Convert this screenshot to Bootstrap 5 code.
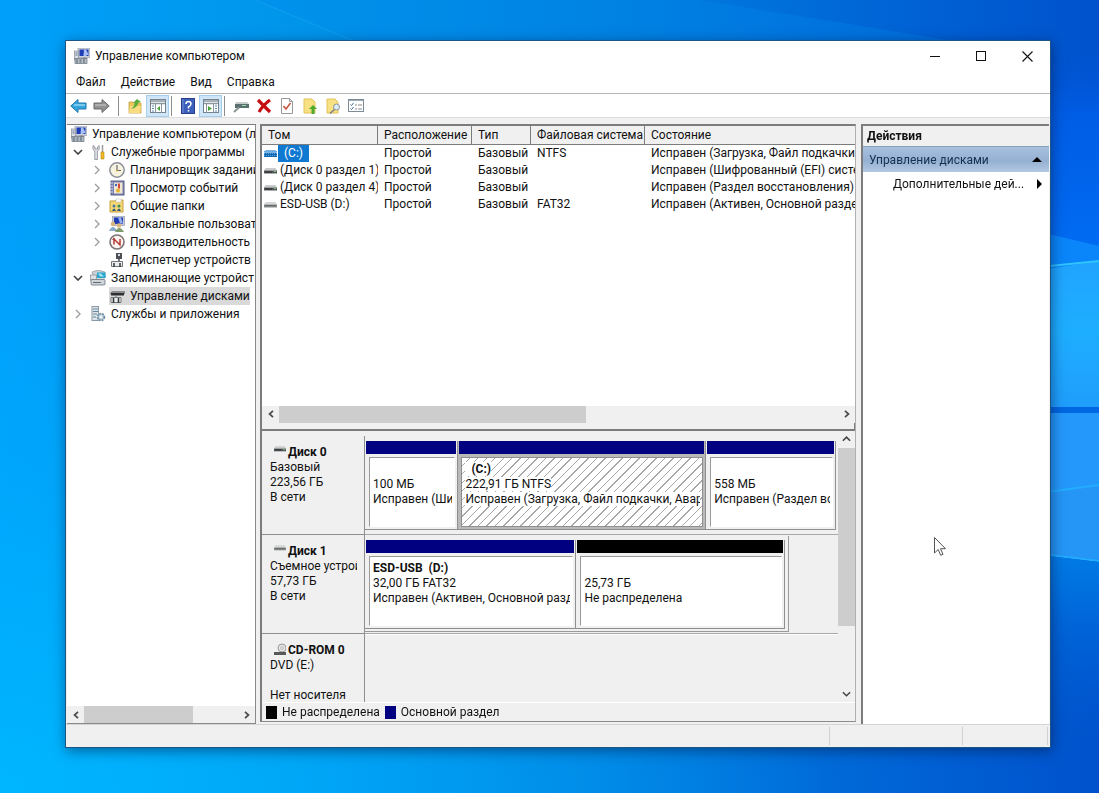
<!DOCTYPE html>
<html lang="ru">
<head>
<meta charset="utf-8">
<meta name="viewport" content="width=device-width, initial-scale=1">
<title>Управление компьютером</title>
<link href="https://cdn.jsdelivr.net/npm/bootstrap@5.3.0/dist/css/bootstrap.min.css" rel="stylesheet">
<style>
  body { font-family: Roboto, "Open Sans", sans-serif; font-size: 12px; line-height: 18px; color: #111; background: #0078de; }
  a { color: inherit; text-decoration: none; }
  button { border: 0; background: none; padding: 0; color: inherit; font: inherit; }
  svg { display: block; flex: none; }
  .wallpaper { position: fixed; inset: 0; width: 100%; height: 100%; z-index: -1; }
  .desktop { height: 100vh; min-height: 560px; padding: 40px 48px 45px 65px; }
  .win { background: #f0f0f0; border: 1px solid #1b5687; box-shadow: 1px 3px 12px rgba(0,20,60,.5); }
  .titlebar { height: 30px; padding-left: 8px; gap: 5px; }
  .caption { width: 46px; height: 30px; }
  .menubar { height: 22px; padding-left: 10px; gap: 15px; }
  .toolbar { height: 25px; border-top: 1px solid #b4b4b4; border-bottom: 1px solid #dcdcdc; padding-left: 4px; }
  .tool { width: 23px; height: 22px; }
  .tool.on { background: #cfe6f8; border: 1px solid #a6cfee; }
  .vsep { width: 1px; height: 20px; background: #8d8d8d; margin: 0 4px 0 2px; }
  .workspace { padding: 6px 1px 0; gap: 4px; min-height: 0; }
  .pane { background: #fff; border-top: 2px solid #7c7c7c; min-height: 0; }
  .tree-pane { width: 189px; border-right: 1px solid #8a8a8a; border-bottom: 1px solid #8a8a8a; border-top-width: 1px; }
  .tree-pane ul { margin: 0; padding: 0; list-style: none; }
  .node { height: 18px; white-space: nowrap; padding-left: 3px; gap: 5px; }
  .node a { gap: 5px; }
  .twist { width: 16px; height: 18px; margin-right: -1px; flex: none; }
  .lvl2 { padding-left: 22px; }
  .chosen { background: #d9d9d9; }
  .hbar { height: 17px; background: #f0f0f0; flex: none; }
  .arrow-btn { width: 17px; height: 17px; }
  .thumb { background: #cdcdcd; }
  .mid-pane { border-left: 2px solid #7c7c7c; border-right: 1px solid #b0b0b0; border-bottom: 1px solid #8a8a8a; background: #f0f0f0; min-width: 0; margin-bottom: 2px; }
  .volumes { flex: 0 1 280px; background: #fff; }
  .voltable { table-layout: fixed; width: 100%; border-collapse: separate; border-spacing: 0; }
  .voltable th, .voltable td { white-space: nowrap; overflow: hidden; padding: 0 0 0 6px; font-weight: 400; }
  .voltable th { height: 19px; line-height: 18px; background: #f0f0f0; border-bottom: 1px solid #7c7c7c; border-right: 1px solid #7c7c7c; }
  .voltable th:last-child { border-right: 0; }
  .voltable td { height: 17px; line-height: 17px; }
  .voltable td:first-child { padding-left: 2px; }
  .voltable a { padding-left: 3px; }
  .voltable .picked { background: #0f78d0; color: #fff; padding: 0 6px; margin-left: 1px; }
  .splitter { height: 8px; flex: none; border-bottom: 2px solid #7c7c7c; border-right: 1px solid #7c7c7c; background: #f0f0f0; }
  .maps { padding-top: 5px; line-height: 15px; }
  .disk { height: 99px; flex: none; }
  .disk.cut { flex: 0 1 68px; }
  .disk-head { width: 103px; padding: 9px 7px 0 8px; border-right: 1px solid #8f8f8f; border-bottom: 1px solid #8f8f8f; white-space: nowrap; overflow: hidden; }
  .disk-head b { padding-left: 2px; }
  .disk-body { border-bottom: 1px solid #a8a8a8; padding: 5px 2px 4px 0; min-width: 0; }
  .disk.cut .disk-head, .disk.cut .disk-body { border-bottom: 0; }
  .disk.cut .disk-body { border-top: 1px solid #fff; }
  .group-box { border-right: 1px solid #9a9a9a; border-bottom: 1px solid #9a9a9a; padding: 4px 3px 2px 0; margin: -4px 0 -3px; min-width: 0; }
  .vol { min-width: 0; border-right: 1px solid #8f8f8f; border-bottom: 1px solid #8f8f8f; padding: 0 1px; }
  .stripe { height: 13px; background: #000080; flex: none; }
  .stripe.free { background: #000; }
  .vol-box { margin: 3px 1px 2px 3px; background: #fff; border: 1px solid #9a9a9a; border-right-color: #fff; border-bottom-color: #fff; padding: 4px 2px 0 3px; white-space: nowrap; overflow: hidden; min-height: 0; }
  .vol-box div { overflow: hidden; }
  .sel { background: #b9b9b9; }
  .sel .vol-box { margin: 3px 1px 2px 2px; border-color: #8f8f8f; background: repeating-linear-gradient(135deg, #fff 0 5px, #a8a8a8 5px 6px); }
  .sel .vol-box span { background: #fff; }
  .vbar { width: 17px; background: #f0f0f0; flex: none; }
  .legend { height: 19px; padding-left: 4px; gap: 5px; border-top: 1px solid #fff; flex: none; white-space: nowrap; }
  .key { width: 11px; height: 13px; }
  .action-pane { width: 188px; border-left: 2px solid #7c7c7c; margin-left: 1px; }
  .action-title { height: 21px; line-height: 20px; background: #f0f0f0; border-bottom: 1px solid #8ba3b8; padding-left: 4px; }
  .action-group { height: 25px; background: linear-gradient(#a9c0df, #94b0d2 55%, #b3c8e2); padding: 0 7px 0 6px; color: #16304f; }
  .action-item { height: 24px; padding: 0 6px 0 30px; }
  .statusbar { height: 23px; border-top: 1px solid #d4d4d4; padding-right: 2px; }
  .statusbar div { border-right: 1px solid #d0d0d0; margin: 2px 0 2px; }
  .pointer { position: absolute; left: 85%; top: 67.7%; }
</style>
</head>
<body class="overflow-hidden">
<svg class="wallpaper" viewBox="0 0 1099 793" preserveAspectRatio="none" aria-hidden="true">
  <defs>
    <linearGradient id="sky" x1="0" y1="0" x2="1" y2="0"><stop offset="0" stop-color="#00a0fa"/><stop offset=".25" stop-color="#0096ec"/><stop offset=".55" stop-color="#0080e0"/><stop offset=".85" stop-color="#0060d4"/><stop offset="1" stop-color="#0052cc"/></linearGradient>
    <radialGradient id="low" cx="0" cy="1" r=".75"><stop offset="0" stop-color="#00b8ff" stop-opacity=".95"/><stop offset="1" stop-color="#00a8ff" stop-opacity="0"/></radialGradient>
    <linearGradient id="side" x1="0" y1="0" x2="0" y2="1"><stop offset="0" stop-color="#0052d0" stop-opacity="0"/><stop offset=".3" stop-color="#005ce4"/><stop offset="1" stop-color="#0070f6"/></linearGradient>
    <linearGradient id="glass" x1="0" y1="0" x2="0" y2="1"><stop offset="0" stop-color="#20a4ff"/><stop offset=".4" stop-color="#1eaeff"/><stop offset="1" stop-color="#2097fb"/></linearGradient>
    <linearGradient id="fall" x1="0" y1="0" x2="0" y2="1"><stop offset="0" stop-color="#007be6"/><stop offset=".3" stop-color="#0064d8"/><stop offset=".8" stop-color="#005ad0" stop-opacity="0"/></linearGradient>
  </defs>
  <rect width="1099" height="793" fill="url(#sky)"/>
  <rect width="1099" height="793" fill="url(#low)"/>
  <path d="M255 0H700L960 42H365Z" fill="#008cea" opacity=".3"/>
  <path d="M255 0 375 50" stroke="#22a6ef" opacity=".5"/>
  <path d="M1040 40H1099V270L1040 280Z" fill="url(#side)"/>
  <path d="M1040 232 1099 246V262L1040 270Z" fill="#0a86fa"/>
  <path d="M1040 270 1099 261V436H1040Z" fill="url(#glass)"/>
  <path d="M1040 267 1099 261" stroke="#2fc4ff" stroke-width="2"/>
  <path d="M1040 413H1099V561L1040 554Z" fill="#2598fb"/>
  <path d="M1040 407H1099V413H1040Z" fill="#0068e2"/>
  <path d="M1040 493 1099 485V561L1040 554Z" fill="#2596f6"/>
  <path d="M1040 493 1099 485M1040 554 1099 561" stroke="#22adff" stroke-width="2" fill="none"/>
  <path d="M1040 555 1099 562V793H1040Z" fill="url(#fall)"/>
</svg>

<!-- Shared icon shapes -->
<svg width="0" height="0" class="position-absolute" aria-hidden="true">
  <symbol id="i-pc" viewBox="0 0 16 16"><rect x="4" y="0" width="12" height="9.500" fill="#cfd3dc" stroke="#8b90a0" stroke-width=".6"/><rect x="5.500" y="1.500" width="9" height="6.500" fill="#1e3cb4"/><path d="M10 1.500h2l2.500 5-3 1.500h-2z" fill="#a9c0f6"/><path d="M9 9.500h3l1 1.500H8z" fill="#8a8d96"/><rect x=".5" y="3" width="4" height="9" fill="#dcdfe4" stroke="#858a94" stroke-width=".7"/><path d="M1.500 5h2M1.500 7h2" stroke="#53708c"/><rect x="1" y="10.500" width="12" height="5" fill="#b8bdc4" stroke="#68737e" stroke-width=".7"/><path d="M2 12h2M5.500 12h2M9 12h2M2 14h2M5.500 14h2M9 14h2" stroke="#4b6376"/></symbol>
  <symbol id="i-tools" viewBox="0 0 16 16"><path d="M3 1.500v4l1.800 1.500v8.500h2.600V7l1.800-1.500v-4L7.500 3v2H5V3z" fill="#e3e5e8" stroke="#85898f" stroke-width=".8"/><path d="M12.500 1v7" stroke="#999" stroke-width="1.500"/><path d="M11 8h3v7h-3z" fill="#f0ba25" stroke="#b78a10" stroke-width=".6"/></symbol>
  <symbol id="i-clock" viewBox="0 0 16 16"><circle cx="8" cy="8" r="7.200" fill="#f6f2de" stroke="#8a8f99" stroke-width="1.500"/><path d="M8 3v5.500h4" stroke="#626977" stroke-width="1.200" fill="none"/><circle cx="8" cy="8.500" r="1" fill="#d4a73a"/></symbol>
  <symbol id="i-events" viewBox="0 0 16 16"><rect x="2" y="1" width="13" height="14" fill="#7a83b4" stroke="#5a6088"/><rect x="5" y="2.500" width="8.500" height="11" fill="#f1e6d2"/><path d="M1 3h3M1 6h3M1 9h3M1 12h3" stroke="#d9dce8"/><path d="M10 3.500v5" stroke="#cf3326" stroke-width="1.800"/><circle cx="9" cy="10.500" r="2" fill="#e3b32c"/><circle cx="7" cy="5" r="1.200" fill="#3c66c0"/></symbol>
  <symbol id="i-shared" viewBox="0 0 16 16"><path d="M1 3h5l1-1h7v12H1z" fill="#f2d774" stroke="#c7a03a"/><path d="M7 1h5v3H7z" fill="#fff" stroke="#bbb" stroke-width=".5"/><circle cx="5" cy="8" r="1.500" fill="#4b78a7"/><circle cx="10" cy="8" r="1.500" fill="#3d8a55"/><path d="M3 13q2-5 4 0M8 13q2-5 4 0" fill="#35567d"/></symbol>
  <symbol id="i-users" viewBox="0 0 16 16"><rect x="3.500" y="0" width="12" height="9.500" fill="#c4c9d5" stroke="#858aa0" stroke-width=".6"/><rect x="5" y="1.500" width="9" height="6.500" fill="#1e3cb4"/><path d="M9 1.500h3l2 6h-3z" fill="#97b2f0"/><circle cx="4" cy="8" r="2.300" fill="#d6b47c"/><path d="M0 15q4-8 8 0z" fill="#86a9cc"/><circle cx="10" cy="9.500" r="2.300" fill="#ddb77e"/><path d="M6 16q4-8 9 0z" fill="#7f9a6a"/></symbol>
  <symbol id="i-perf" viewBox="0 0 16 16"><circle cx="8" cy="8" r="7" fill="#fcf4f2" stroke="#7c7275" stroke-width="1.600"/><path d="M5 10.500V5l6 6V5" fill="none" stroke="#b83b34" stroke-width="1.500"/><path d="M3.500 6l2-2" stroke="#8d2524"/></symbol>
  <symbol id="i-device" viewBox="0 0 16 16"><rect x="7" y="1" width="6" height="6" fill="#4d5157"/><rect x="9" y="2" width="2" height="2" fill="#d5d9de"/><path d="M9 7h2v3H9z" fill="#777"/><path d="M2.500 9.500h11v5h-11z" fill="#e9ebed" stroke="#73777c"/><path d="M5 11v4M11 11v4" stroke="#3f4348" stroke-width="1.600"/></symbol>
  <symbol id="i-store" viewBox="0 0 16 16"><path d="M2 2 8 0l7 2v6H4z" fill="#c9d1d8" stroke="#8d969e" stroke-width=".7"/><path d="M7 2.500h8.500V8H7z" fill="#28a6cb"/><path d="M8 3.500h3l3 3h-4z" fill="#a4e3f2"/><rect x=".5" y="5" width="6" height="5" fill="#dde0e3" stroke="#888e94" stroke-width=".7"/><rect x="1" y="9.500" width="14" height="5.500" rx="1" fill="#d0d5da" stroke="#6a747d" stroke-width=".8"/><path d="M3 12.500h8" stroke="#606970"/></symbol>
  <symbol id="i-diskman" viewBox="0 0 16 16"><path d="M1 5 3 3h13v3H1z" fill="#8a8d90"/><path d="M2 5h13v2.500H2z" fill="#2d2f31"/><path d="M2 9.500h10v5H2z" fill="#eceeee" stroke="#777b7e"/><path d="M4.500 10v5M9.500 10v5" stroke="#34383b" stroke-width="1.600"/><path d="M7 7v3" stroke="#777"/></symbol>
  <symbol id="i-services" viewBox="0 0 16 16"><rect x="2" y=".5" width="6.500" height="14" fill="#dfe5e9" stroke="#8b99a4"/><path d="M3 3h5M3 5.500h5M3 8h4M3 11h3" stroke="#65899e"/><circle cx="11" cy="11" r="3.400" fill="#b8ced9" stroke="#6d8fa3" stroke-width="1.800" stroke-dasharray="1.800 1"/><circle cx="11" cy="11" r="1.400" fill="#f4f8fa"/></symbol>
  <symbol id="i-hdd" viewBox="0 0 13 8"><path d="M1.500 1h10L13 3.500H0z" fill="#c9cacb"/><path d="M0 3.500h13v3H0z" fill="#55595b"/><path d="M1 5h7" stroke="#252829"/><rect x="10" y="4" width="2" height="1" fill="#6ec26e"/></symbol>
  <symbol id="i-hdd-on" viewBox="0 0 13 8"><path d="M1.500 0h10L13 3.500H0z" fill="#7db1df"/><path d="M0 3h13v4H0z" fill="#1769ad"/><path d="M0 1.500h13M0 3.500h13M0 5.500h13" stroke="#4da4e8" stroke-dasharray="1 1"/></symbol>
  <symbol id="i-usb" viewBox="0 0 13 8"><path d="M1.500 1h10L13 3.500H0z" fill="#d5d6d6"/><path d="M0 3.500h13v3H0z" fill="#86898a"/><path d="M1 4.500h11" stroke="#626667"/></symbol>
  <symbol id="c-right" viewBox="0 0 6 10"><path d="M1 1l4 4-4 4" fill="none" stroke="currentColor" stroke-width="1.400"/></symbol>
  <symbol id="c-down" viewBox="0 0 10 6"><path d="M1 1l4 4 4-4" fill="none" stroke="currentColor" stroke-width="1.600"/></symbol>
  <symbol id="c-up" viewBox="0 0 10 6"><path d="M1 5l4-4 4 4" fill="none" stroke="currentColor" stroke-width="1.800"/></symbol>
  <symbol id="b-left" viewBox="0 0 6 8"><path d="M5 .8 1.500 4 5 7.200" fill="none" stroke="#4a4a4a" stroke-width="1.700"/></symbol>
  <symbol id="b-right" viewBox="0 0 6 8"><path d="M1 .8 4.500 4 1 7.200" fill="none" stroke="#4a4a4a" stroke-width="1.700"/></symbol>
</svg>

<div class="desktop d-flex">
<main class="win d-flex flex-column flex-grow-1 overflow-hidden">
  <header class="bg-white">
    <div class="titlebar d-flex align-items-center">
      <svg width="16" height="16"><use href="#i-pc"/></svg>
      <span>Управление компьютером</span>
      <div class="d-flex ms-auto">
        <button class="caption d-flex align-items-center justify-content-center" aria-label="Свернуть"><svg width="11" height="11"><path d="M0 5.500h10" stroke="#111"/></svg></button>
        <button class="caption d-flex align-items-center justify-content-center" aria-label="Развернуть"><svg width="11" height="11"><rect x=".5" y=".5" width="9" height="9" fill="none" stroke="#111"/></svg></button>
        <button class="caption d-flex align-items-center justify-content-center" aria-label="Закрыть"><svg width="11" height="11"><path d="M.5.5l10 10M10.500.5l-10 10" stroke="#111" stroke-width="1.100"/></svg></button>
      </div>
    </div>
    <nav class="menubar d-flex align-items-center">
      <a href="#">Файл</a><a href="#">Действие</a><a href="#">Вид</a><a href="#">Справка</a>
    </nav>
    <div class="toolbar d-flex align-items-center" role="toolbar">
      <button class="tool d-flex align-items-center" aria-label="Назад"><svg width="17" height="16"><path d="M.8 8 8 1.500V5h8v6H8v3.500z" fill="#35a5dd" stroke="#2278ad"/><path d="M4 7h11" stroke="#91d7f3" stroke-width="1.500"/></svg></button>
      <button class="tool d-flex align-items-center" aria-label="Вперед"><svg width="17" height="16"><path d="M16.200 8 9 1.500V5H1v6h8v3.500z" fill="#929292" stroke="#696969"/><path d="M2 7h11" stroke="#b8b8b8" stroke-width="1.500"/></svg></button>
      <span class="vsep"></span>
      <button class="tool d-flex align-items-center justify-content-center" aria-label="Вверх"><svg width="16" height="16"><path d="M2 4h4l1 1h7v10H2z" fill="#ecc85c" stroke="#c6a03e" stroke-width=".8"/><path d="M3 8h11l-1 7H2z" fill="#f7dc82"/><path d="M4 11q3-2 4-6L6 5l4-4 4 3-2.500.5Q10 10 4 11z" fill="#58ad3c"/></svg></button>
      <button class="tool on d-flex align-items-center justify-content-center" aria-label="Дерево консоли"><svg width="16" height="14"><rect x=".5" y=".5" width="15" height="13" fill="#fff" stroke="#75838e"/><path d="M1 2h14M1 4.500h14" stroke="#8b979f" stroke-width="1.500"/><path d="M5.500 5v9M11.500 5v9" stroke="#8a969e"/><path d="M2 7h2M2 9.500h2M2 12h2" stroke="#5b86aa"/><path d="M10 7v5L7 9.500z" fill="#48a13b"/></svg></button>
      <span class="vsep"></span>
      <button class="tool d-flex align-items-center justify-content-center" aria-label="Справка"><svg width="14" height="16"><rect x=".5" y=".5" width="13" height="15" fill="#3b5fba" stroke="#263f88"/><path d="M2 1v14" stroke="#7390d4"/><path d="M5 6q0-2.500 2.500-2.500T10 6q0 1.500-2.500 3v1.500M7.500 12v1.500" stroke="#fff" stroke-width="1.500" fill="none"/></svg></button>
      <button class="tool on d-flex align-items-center justify-content-center" aria-label="Панель действий"><svg width="16" height="14"><rect x=".5" y=".5" width="15" height="13" fill="#fff" stroke="#75838e"/><path d="M1 2h14M1 4.500h14" stroke="#8b979f" stroke-width="1.500"/><path d="M3.500 5v9M10.500 5v9" stroke="#8a969e"/><path d="M12 7h2M12 9.500h2M12 12h2" stroke="#5b86aa"/><path d="M5 7v5l4-2.500z" fill="#48a13b"/></svg></button>
      <span class="vsep"></span>
      <button class="tool d-flex align-items-center justify-content-center" aria-label="Обновить"><svg width="16" height="16"><path d="M3 4h11l2 2H2z" fill="#c6cccb"/><path d="M2 6h14v4H2z" fill="#59706f"/><path d="M9 7.500h4" stroke="#9bdbb0"/><path d="M1 14l5-4.500" stroke="#8a9998" stroke-width="2"/></svg></button>
      <button class="tool d-flex align-items-center justify-content-center" aria-label="Удалить"><svg width="16" height="16"><path d="M2 2q4 4 12 12M14 2Q7 7 3 14" stroke="#c50f12" stroke-width="3.200" fill="none"/></svg></button>
      <button class="tool d-flex align-items-center justify-content-center" aria-label="Свойства"><svg width="14" height="16"><path d="M1.500.5h8l3 3v12h-11z" fill="#fff" stroke="#999"/><path d="M9.500.5v3h3" fill="none" stroke="#999"/><path d="M3.500 8 6 11l4.500-6" stroke="#c4533a" stroke-width="1.500" fill="none"/></svg></button>
      <button class="tool d-flex align-items-center justify-content-center" aria-label="Открыть"><svg width="16" height="16"><path d="M2 1h8l3 3v11H2z" fill="#f8e183" stroke="#e2c25a"/><path d="M11 7l4 4h-2.500v5h-3v-5H7z" fill="#4eab30"/></svg></button>
      <button class="tool d-flex align-items-center justify-content-center" aria-label="Найти"><svg width="16" height="16"><path d="M2 1h8l3 3v11H2z" fill="#f8e183" stroke="#e2c25a"/><circle cx="11.500" cy="9" r="3" fill="#dcecf4" stroke="#8a959b"/><path d="M9.500 11.500 5 15.500" stroke="#7e8283" stroke-width="1.600"/></svg></button>
      <button class="tool d-flex align-items-center justify-content-center" aria-label="Параметры"><svg width="16" height="13"><rect x=".5" y=".5" width="15" height="12" fill="#fff" stroke="#7d8b96"/><path d="M1 1.500h14" stroke="#9baab5"/><path d="M2.500 5.500l1 1 2-2.500M2.500 9.500l1 1 2-2.500" stroke="#3c6d9c" fill="none"/><path d="M7 6h2M10 6h4M7 10h2M10 10h4" stroke="#8a8a8a"/></svg></button>
    </div>
  </header>

  <div class="workspace d-flex flex-grow-1">
    <aside class="pane tree-pane d-flex flex-column flex-shrink-0">
      <ul class="flex-grow-1 overflow-hidden">
        <li class="node d-flex align-items-center ps-1"><a class="d-flex align-items-center" href="#"><svg width="16" height="16"><use href="#i-pc"/></svg>Управление компьютером (л</a></li>
        <li class="node d-flex align-items-center"><button class="twist d-flex align-items-center justify-content-center" aria-label="Свернуть узел"><svg width="10" height="6" color="#404040"><use href="#c-down"/></svg></button><a class="d-flex align-items-center" href="#"><svg width="16" height="16"><use href="#i-tools"/></svg>Служебные программы</a></li>
        <li class="node lvl2 d-flex align-items-center"><button class="twist d-flex align-items-center justify-content-center" aria-label="Развернуть узел"><svg width="6" height="10" color="#a0a0a0"><use href="#c-right"/></svg></button><a class="d-flex align-items-center" href="#"><svg width="16" height="16"><use href="#i-clock"/></svg>Планировщик заданий</a></li>
        <li class="node lvl2 d-flex align-items-center"><button class="twist d-flex align-items-center justify-content-center" aria-label="Развернуть узел"><svg width="6" height="10" color="#a0a0a0"><use href="#c-right"/></svg></button><a class="d-flex align-items-center" href="#"><svg width="16" height="16"><use href="#i-events"/></svg>Просмотр событий</a></li>
        <li class="node lvl2 d-flex align-items-center"><button class="twist d-flex align-items-center justify-content-center" aria-label="Развернуть узел"><svg width="6" height="10" color="#a0a0a0"><use href="#c-right"/></svg></button><a class="d-flex align-items-center" href="#"><svg width="16" height="16"><use href="#i-shared"/></svg>Общие папки</a></li>
        <li class="node lvl2 d-flex align-items-center"><button class="twist d-flex align-items-center justify-content-center" aria-label="Развернуть узел"><svg width="6" height="10" color="#a0a0a0"><use href="#c-right"/></svg></button><a class="d-flex align-items-center" href="#"><svg width="16" height="16"><use href="#i-users"/></svg>Локальные пользовате</a></li>
        <li class="node lvl2 d-flex align-items-center"><button class="twist d-flex align-items-center justify-content-center" aria-label="Развернуть узел"><svg width="6" height="10" color="#a0a0a0"><use href="#c-right"/></svg></button><a class="d-flex align-items-center" href="#"><svg width="16" height="16"><use href="#i-perf"/></svg>Производительность</a></li>
        <li class="node lvl2 d-flex align-items-center"><span class="twist"></span><a class="d-flex align-items-center" href="#"><svg width="16" height="16"><use href="#i-device"/></svg>Диспетчер устройств</a></li>
        <li class="node d-flex align-items-center"><button class="twist d-flex align-items-center justify-content-center" aria-label="Свернуть узел"><svg width="10" height="6" color="#404040"><use href="#c-down"/></svg></button><a class="d-flex align-items-center" href="#"><svg width="16" height="16"><use href="#i-store"/></svg>Запоминающие устройст</a></li>
        <li class="node lvl2 d-flex align-items-center"><span class="twist"></span><a class="chosen d-flex align-items-center" href="#" aria-current="page"><svg width="16" height="16"><use href="#i-diskman"/></svg>Управление дисками</a></li>
        <li class="node d-flex align-items-center"><button class="twist d-flex align-items-center justify-content-center" aria-label="Развернуть узел"><svg width="6" height="10" color="#a0a0a0"><use href="#c-right"/></svg></button><a class="d-flex align-items-center" href="#"><svg width="16" height="16"><use href="#i-services"/></svg>Службы и приложения</a></li>
      </ul>
      <div class="hbar d-flex">
        <button class="arrow-btn d-flex align-items-center justify-content-center" aria-label="Влево"><svg width="6" height="8"><use href="#b-left"/></svg></button>
        <div class="flex-grow-1 d-flex"><div class="thumb" style="width:71%"></div></div>
        <button class="arrow-btn d-flex align-items-center justify-content-center" aria-label="Вправо"><svg width="6" height="8"><use href="#b-right"/></svg></button>
      </div>
    </aside>

    <section class="pane mid-pane d-flex flex-column flex-grow-1">
      <div class="volumes overflow-hidden">
        <table class="voltable">
          <colgroup><col style="width:116px"><col style="width:94px"><col style="width:59px"><col style="width:114px"><col></colgroup>
          <thead><tr><th>Том</th><th>Расположение</th><th>Тип</th><th>Файловая система</th><th>Состояние</th></tr></thead>
          <tbody>
            <tr><td><div class="d-flex align-items-center"><svg width="13" height="8"><use href="#i-hdd-on"/></svg><a class="picked" href="#">(C:)</a></div></td><td>Простой</td><td>Базовый</td><td>NTFS</td><td>Исправен (Загрузка, Файл подкачки,</td></tr>
            <tr><td><div class="d-flex align-items-center"><svg width="13" height="8"><use href="#i-hdd"/></svg><a href="#">(Диск 0 раздел 1)</a></div></td><td>Простой</td><td>Базовый</td><td></td><td>Исправен (Шифрованный (EFI) систе</td></tr>
            <tr><td><div class="d-flex align-items-center"><svg width="13" height="8"><use href="#i-hdd"/></svg><a href="#">(Диск 0 раздел 4)</a></div></td><td>Простой</td><td>Базовый</td><td></td><td>Исправен (Раздел восстановления)</td></tr>
            <tr><td><div class="d-flex align-items-center"><svg width="13" height="8"><use href="#i-usb"/></svg><a href="#">ESD-USB (D:)</a></div></td><td>Простой</td><td>Базовый</td><td>FAT32</td><td>Исправен (Активен, Основной раздел</td></tr>
          </tbody>
        </table>
      </div>
      <div class="hbar d-flex">
        <button class="arrow-btn d-flex align-items-center justify-content-center" aria-label="Влево"><svg width="6" height="8"><use href="#b-left"/></svg></button>
        <div class="flex-grow-1 d-flex"><div class="thumb" style="width:55%"></div></div>
        <button class="arrow-btn d-flex align-items-center justify-content-center" aria-label="Вправо"><svg width="6" height="8"><use href="#b-right"/></svg></button>
      </div>
      <div class="splitter"></div>

      <div class="d-flex flex-grow-1 overflow-hidden">
        <div class="maps d-flex flex-column flex-grow-1 overflow-hidden">
          <div class="disk d-flex">
            <div class="disk-head flex-shrink-0"><div class="d-flex ps-1"><svg width="12" height="8"><use href="#i-hdd"/></svg><b>Диск 0</b></div>Базовый<br>223,56 ГБ<br>В сети</div>
            <div class="disk-body d-flex flex-grow-1">
              <div class="vol d-flex flex-column" style="flex:92 1 0"><div class="stripe"></div><div class="vol-box flex-grow-1"><div><br>100 МБ<br>Исправен (Ши</div></div></div>
              <div class="vol sel d-flex flex-column" style="flex:249 1 0"><div class="stripe"></div><div class="vol-box flex-grow-1"><div><span><b>&nbsp; (C:) </b></span><br><span>222,91 ГБ NTFS</span><br><span>Исправен (Загрузка, Файл подкачки, Авар</span></div></div></div>
              <div class="vol d-flex flex-column" style="flex:129 1 0"><div class="stripe"></div><div class="vol-box flex-grow-1"><div><br>558 МБ<br>Исправен (Раздел во</div></div></div>
            </div>
          </div>
          <div class="disk d-flex">
            <div class="disk-head flex-shrink-0"><div class="d-flex ps-1"><svg width="12" height="8"><use href="#i-usb"/></svg><b>Диск 1</b></div><div class="overflow-hidden">Съемное устрой</div>57,73 ГБ<br>В сети</div>
            <div class="disk-body d-flex flex-grow-1">
              <div class="group-box d-flex" style="width:90%">
                <div class="vol d-flex flex-column" style="flex:211 1 0"><div class="stripe"></div><div class="vol-box flex-grow-1"><div><b>ESD-USB&nbsp; (D:)</b><br>32,00 ГБ FAT32<br>Исправен (Активен, Основной разд</div></div></div>
                <div class="vol d-flex flex-column" style="flex:208 1 0"><div class="stripe free"></div><div class="vol-box flex-grow-1"><div><br>25,73 ГБ<br>Не распределена</div></div></div>
              </div>
            </div>
          </div>
          <div class="disk cut d-flex">
            <div class="disk-head flex-shrink-0"><div class="d-flex ps-1"><svg width="12" height="13"><circle cx="8" cy="5" r="4" fill="#e6e6e6" stroke="#999"/><circle cx="8" cy="5" r="1.300" fill="#fff" stroke="#999" stroke-width=".7"/><path d="M0 9h12v3H0z" fill="#565859"/></svg><b>CD-ROM 0</b></div>DVD (E:)<br><br>Нет носителя</div>
            <div class="disk-body flex-grow-1"></div>
          </div>
        </div>
        <div class="vbar d-flex flex-column">
          <button class="arrow-btn d-flex align-items-center justify-content-center" aria-label="Прокрутить вверх"><svg width="9" height="6" color="#444"><use href="#c-up"/></svg></button>
          <div class="flex-grow-1"><div class="thumb" style="height:75%"></div></div>
          <button class="arrow-btn d-flex align-items-center justify-content-center" aria-label="Прокрутить вниз"><svg width="9" height="6" color="#444"><use href="#c-down"/></svg></button>
        </div>
      </div>
      <div class="legend d-flex align-items-center"><span class="key bg-black"></span><span>Не распределена</span><span class="key stripe"></span><span>Основной раздел</span></div>
    </section>

    <aside class="pane action-pane flex-shrink-0">
      <div class="action-title"><b>Действия</b></div>
      <div class="action-group d-flex align-items-center justify-content-between"><span>Управление дисками</span><svg width="10" height="5"><path d="M0 5 5 0l5 5z" fill="#000"/></svg></div>
      <a class="action-item d-flex align-items-center justify-content-between" href="#"><span>Дополнительные дей...</span><svg width="6" height="10"><path d="M0 0l5 5-5 5z" fill="#000"/></svg></a>
    </aside>
  </div>
  <footer class="statusbar d-flex"><div class="flex-grow-1"></div><div style="width:133px"></div><div style="width:85px"></div></footer>
</main>
</div>
<svg class="pointer" width="12" height="19" aria-hidden="true"><path d="M.5.5v15.500l3.700-3.500 2.500 5.800 2.300-1-2.500-5.600h5z" fill="#fff" stroke="#555"/></svg>
<script src="https://cdn.jsdelivr.net/npm/bootstrap@5.3.0/dist/js/bootstrap.bundle.min.js"></script>
</body>
</html>
